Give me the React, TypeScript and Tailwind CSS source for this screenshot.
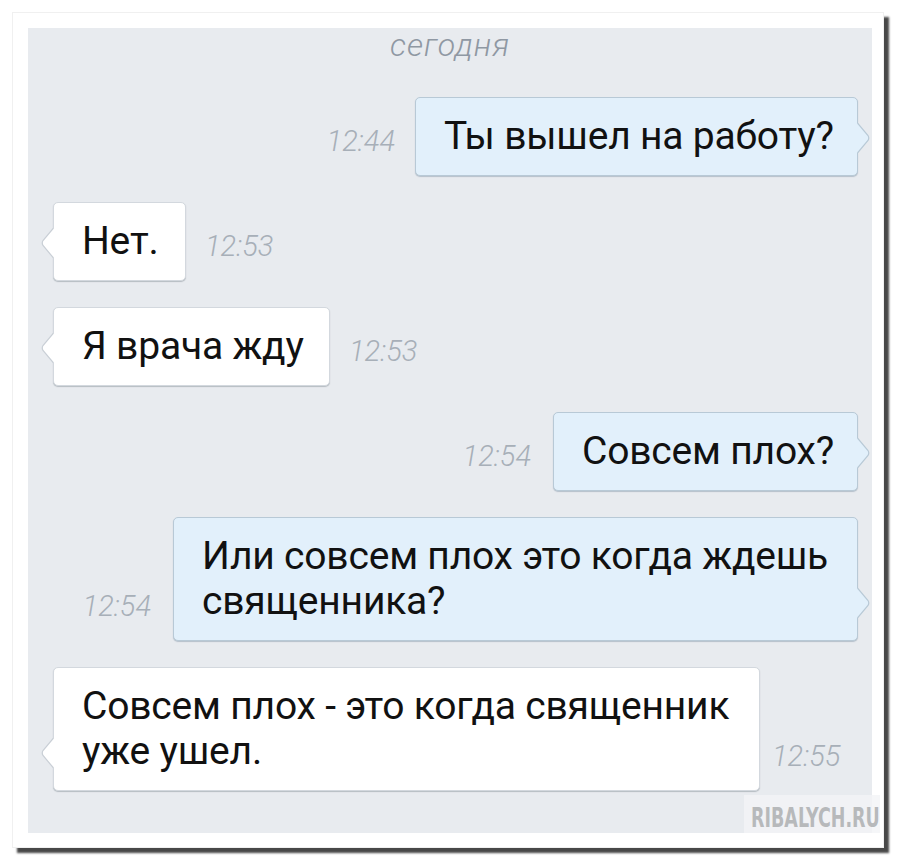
const font = "font-['Roboto','Noto_Sans',sans-serif]";

type Msg = {
  out: boolean;
  lines: string[];
  time: string;
  width: string;
  gap: string;
};

const messages: Msg[] = [
  { out: true, lines: ['Ты вышел на работу?'], time: '12:44', width: 'w-[443px]', gap: 'gap-[20px]' },
  { out: false, lines: ['Нет.'], time: '12:53', width: 'w-[133px]', gap: 'gap-[19px]' },
  { out: false, lines: ['Я врача жду'], time: '12:53', width: 'w-[277px]', gap: 'gap-[19px]' },
  { out: true, lines: ['Совсем плох?'], time: '12:54', width: 'w-[305px]', gap: 'gap-[22px]' },
  {
    out: true,
    lines: ['Или совсем плох это когда ждешь', 'священника?'],
    time: '12:54',
    width: 'w-[685px]',
    gap: 'gap-[22px]'
  },
  {
    out: false,
    lines: ['Совсем плох - это когда священник', 'уже ушел.'],
    time: '12:55',
    width: 'w-[707px]',
    gap: 'gap-[12px]'
  }
];

// little pointer on the side of a bubble
const Tail = ({ out }: { out: boolean }) => {
  const fill = out ? '#e2f0fb' : '#ffffff';
  const stroke = out ? '#b8c9d6' : '#c9cfd6';
  return (
    <svg
      width="14"
      height="30"
      viewBox="0 0 14 30"
      className={`absolute bottom-[22px] ${out ? 'right-[-13px]' : 'left-[-13px] -scale-x-100'}`}
    >
      <path d="M0 0 L1.5 0 L12 12.5 Q13.5 15 12 17.5 L1.5 30 L0 30 Z" fill={fill} />
      <path d="M1.5 0 L12 12.5 Q13.5 15 12 17.5 L1.5 30" fill="none" stroke={stroke} strokeWidth="1.2" />
    </svg>
  );
};

const Bubble = ({ m }: { m: Msg }) => (
  <div
    className={`relative ${m.width} rounded-[5px] border px-[28px] py-[16px] text-[39px] leading-[45px] text-[#111111] ${
      m.out
        ? 'bg-[#e2f0fb] border-[#b8c9d6] shadow-[0_1px_1px_rgba(120,140,160,0.45)]'
        : 'bg-white border-[#d3d8de] shadow-[0_1px_1px_rgba(120,130,140,0.45)]'
    }`}
  >
    {m.lines.map((l, i) => (
      <div key={i} className="whitespace-nowrap tracking-[-0.2px]">
        {l}
      </div>
    ))}
    <Tail out={m.out} />
  </div>
);

const Time = ({ t }: { t: string }) => (
  <div className="mb-[12px] text-[29px] font-light italic leading-[45px] text-[#a7afb8]">{t}</div>
);

export default function App() {
  return (
    <div className={`w-[900px] h-[862px] bg-white ${font}`}>
      <div className="relative ml-[12px] mt-[12px] w-[872px] h-[836px] bg-white border border-[#f0f0f0] shadow-[5px_5px_2px_rgba(40,40,40,0.85)] pl-[15px] pt-[15px]">
        <div className="relative flex h-[805px] w-[844px] flex-col bg-[#e8ebef]">
          <div className="mt-[2px] text-center text-[32px] font-light italic leading-[30px] tracking-[1px] text-[#8f98a3]">
            сегодня
          </div>

          <div className="mt-[37px] flex flex-col gap-[26px]">
            {messages.map((m, i) =>
              m.out ? (
                <div key={i} className={`flex items-end justify-end pr-[14px] ${m.gap}`}>
                  <Time t={m.time} />
                  <Bubble m={m} />
                </div>
              ) : (
                <div key={i} className={`flex items-end pl-[25px] ${m.gap}`}>
                  <Bubble m={m} />
                  <Time t={m.time} />
                </div>
              )
            )}
          </div>
        </div>

        {/* watermark */}
        <div className="absolute right-[3px] bottom-[14px] flex h-[38px] w-[136px] items-end justify-end bg-[#f3f4f6]/80">
          <span className="origin-right scale-x-[0.72] font-['DejaVu_Sans_Condensed','DejaVu_Sans',sans-serif] text-[27px] font-bold leading-[30px] text-[#b7b9bb] whitespace-nowrap">
            RIBALYCH.RU
          </span>
        </div>
      </div>
    </div>
  );
}
